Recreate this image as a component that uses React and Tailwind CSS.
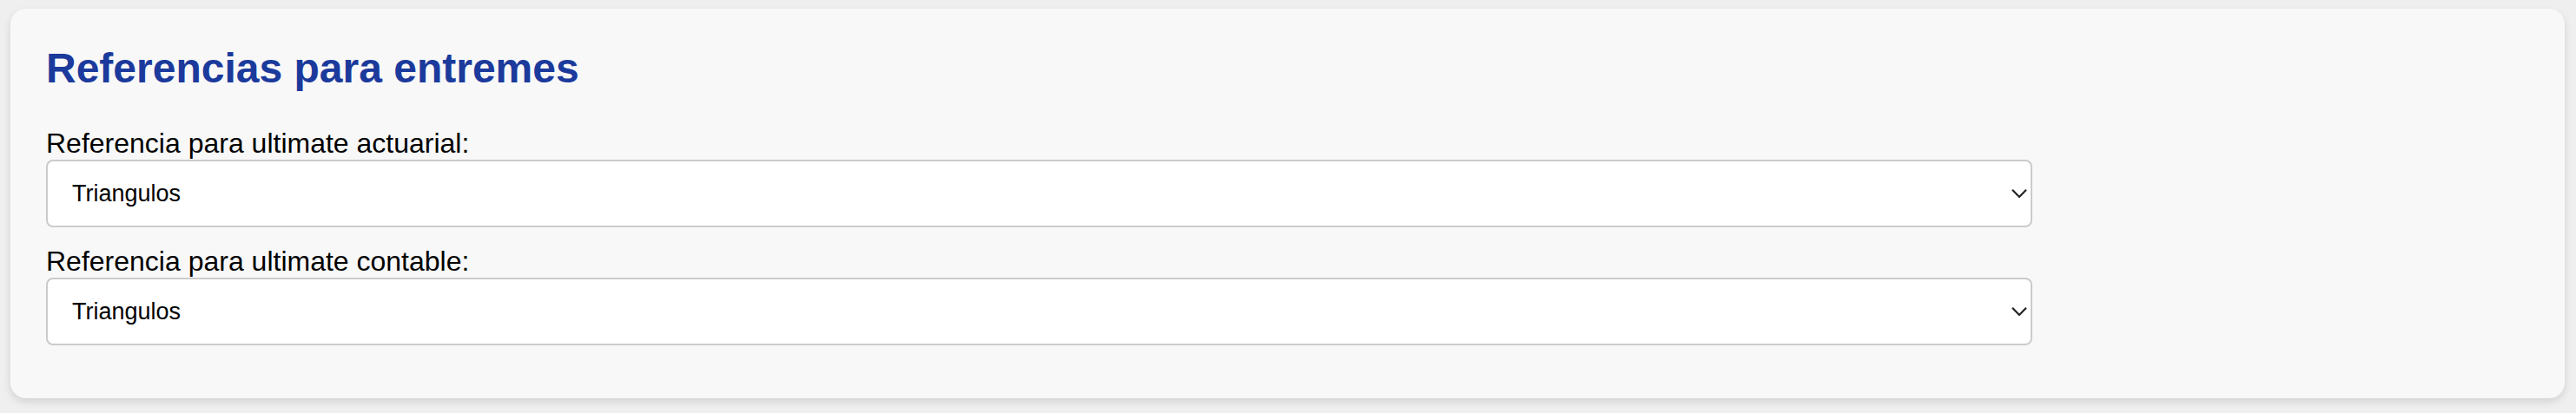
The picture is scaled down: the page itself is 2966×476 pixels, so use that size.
import { useState } from "react";

const OPTIONS = ["Triangulos", "Siniestralidad", "Promedio"];

function Chevron() {
  return (
    <svg
      width="18"
      height="11"
      viewBox="0 0 18 11"
      fill="none"
      className="pointer-events-none absolute right-[6px] top-1/2 -translate-y-1/2"
    >
      <path d="M1 1.2 L9 9.4 L17 1.2" stroke="#222" strokeWidth="2.2" />
    </svg>
  );
}

function RefSelect({ label, value, onChange }) {
  return (
    <div className="mb-[20px]">
      <label className="block text-[32px] leading-[38px] text-black">{label}</label>
      <div className="relative w-[80%]">
        <select
          value={value}
          onChange={(e) => onChange(e.target.value)}
          className="block h-[78px] w-full appearance-none rounded-[8px] border-2 border-[#cbcbcb] bg-white pl-[28px] pr-[40px] text-[27px] text-black outline-none"
        >
          {OPTIONS.map((o) => (
            <option key={o} value={o}>
              {o}
            </option>
          ))}
        </select>
        <Chevron />
      </div>
    </div>
  );
}

export default function App() {
  const [actuarial, setActuarial] = useState("Triangulos");
  const [contable, setContable] = useState("Triangulos");

  return (
    <div
      className="min-h-[476px] bg-[#efefef] pt-[10px] pb-[18px] pl-[12px] pr-[13px]"
      style={{ fontFamily: '"Liberation Sans", Arial, sans-serif' }}
    >
      <div className="rounded-[18px] bg-[#f8f8f8] px-[41px] pt-[41px] pb-[41px] shadow-[0_4px_10px_rgba(0,0,0,0.12)]">
        <h2 className="mb-[40px] text-[48px] font-bold leading-[55px] text-[#1b3a9c]">
          Referencias para entremes
        </h2>
        <RefSelect
          label="Referencia para ultimate actuarial:"
          value={actuarial}
          onChange={setActuarial}
        />
        <RefSelect
          label="Referencia para ultimate contable:"
          value={contable}
          onChange={setContable}
        />
      </div>
    </div>
  );
}
